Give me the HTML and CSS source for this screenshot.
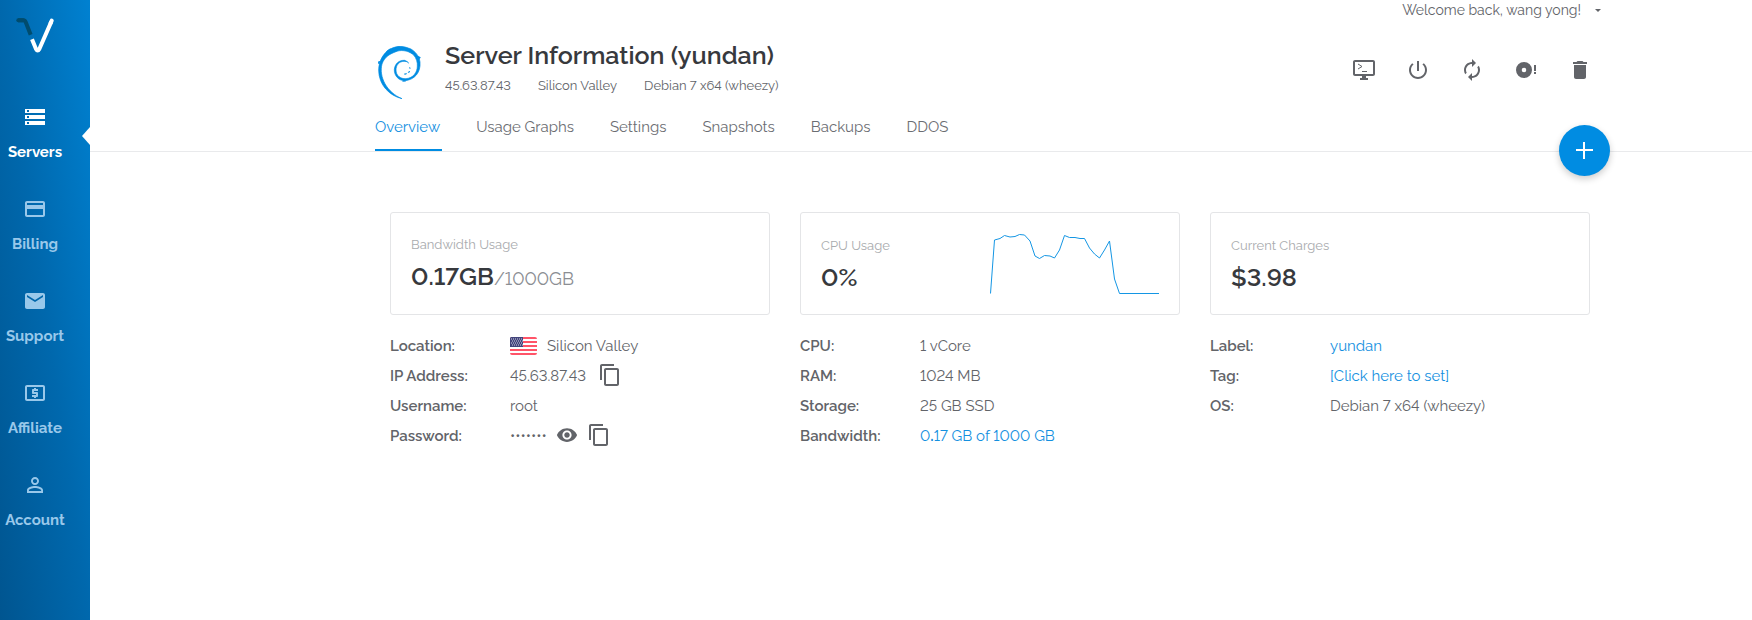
FILE: index.html
```html
<!DOCTYPE html>
<html lang="en">
<head>
<meta charset="utf-8">
<title>Server Information</title>
<link rel="stylesheet" href="styles.css">
</head>
<body>
<div class="app">
  <aside class="sidebar">
    <a class="brand" href="#" aria-label="Home">
      <svg width="38" height="36" viewBox="0 0 114 108" fill="none" stroke-linecap="round" stroke-linejoin="round">
        <path d="M6 10h16q5 0 7 5l15 38" stroke="#004c6d" stroke-width="12" stroke-linecap="butt"/>
        <path d="M7 10h14" stroke="#004c6d" stroke-width="12"/>
        <path d="M48 67l12 29q5 9 10 0L106 14" stroke="#fff" stroke-width="12" stroke-linecap="butt"/>
        <path d="M104 18l3-7" stroke="#fff" stroke-width="12"/>
      </svg>
    </a>
    <nav class="menu">
      <a class="menu-item active" href="#">
        <svg width="24" height="24" viewBox="0 0 24 24"><path d="M2 20h20v-4H2v4zm2-3h2v2H4v-2zM2 4v4h20V4H2zm4 3H4V5h2v2zm-4 7h20v-4H2v4zm2-3h2v2H4v-2z"/></svg>
        <span>Servers</span>
      </a>
      <a class="menu-item" href="#">
        <svg width="24" height="24" viewBox="0 0 24 24"><path d="M20 4H4c-1.11 0-1.99.89-1.99 2L2 18c0 1.11.89 2 2 2h16c1.11 0 2-.89 2-2V6c0-1.11-.89-2-2-2zm0 14H4v-6h16v6zm0-10H4V6h16v2z"/></svg>
        <span>Billing</span>
      </a>
      <a class="menu-item" href="#">
        <svg width="24" height="24" viewBox="0 0 24 24"><path d="M20 4H4c-1.1 0-1.99.9-1.99 2L2 18c0 1.1.9 2 2 2h16c1.1 0 2-.9 2-2V6c0-1.1-.9-2-2-2zm0 4l-8 5-8-5V6l8 5 8-5v2z"/></svg>
        <span>Support</span>
      </a>
      <a class="menu-item" href="#">
        <svg width="24" height="24" viewBox="0 0 24 24"><path d="M11 17h2v-1h1c.55 0 1-.45 1-1v-3c0-.55-.45-1-1-1h-3v-1h4V8h-2V7h-2v1h-1c-.55 0-1 .45-1 1v3c0 .55.45 1 1 1h3v1H9v2h2v1zm9-13H4c-1.11 0-1.99.89-1.99 2L2 18c0 1.11.89 2 2 2h16c1.11 0 2-.89 2-2V6c0-1.11-.89-2-2-2zm0 14H4V6h16v12z"/></svg>
        <span>Affiliate</span>
      </a>
      <a class="menu-item" href="#">
        <svg width="24" height="24" viewBox="0 0 24 24"><path d="M12 5.9c1.16 0 2.1.94 2.1 2.1s-.94 2.1-2.1 2.1S9.900 9.160 9.900 8s.94-2.100 2.100-2.100m0 9c2.970 0 6.100 1.460 6.100 2.100v1.100H5.900V17c0-.64 3.130-2.100 6.100-2.100M12 4C9.790 4 8 5.790 8 8s1.790 4 4 4 4-1.790 4-4-1.790-4-4-4zm0 9c-2.670 0-8 1.340-8 4v3h16v-3c0-2.660-5.330-4-8-4z"/></svg>
        <span>Account</span>
      </a>
    </nav>
  </aside>

  <main class="main">
    <header class="header">
      <div class="topbar">
        <button class="user" type="button">Welcome back, wang yong!
          <svg width="6" height="3" viewBox="0 0 6 3"><path d="M0 0h6L3 3z"/></svg>
        </button>
      </div>
      <div class="server">
        <svg class="os-logo" width="43" height="53" viewBox="0 0 129 159">
          <path d="M72 158C36 150 2 118 2 72C3 30 32 1 68 1C82 2 89 6 97 8C111 16 123 28 126 48C129 80 109 101 82 104C62 105 48 89 49 70C51 53 63 42 80 43L88 47L78 46C63 46 54 58 54 72C54 89 67 99 84 98C106 96 118 79 118 60C119 50 115 36 107 27L103 24C88 13 67 11 54 17C38 23 20 31 12 54C2 92 26 139 72 158Z"/>
          <path d="M0 48l6-2-3 8zM26 16l11-8-7 14zM75 104l8 1-9 1zM79 84l7-1-5 2zM91 79l4-4-2 5zM95 64l1 4zM88 48l4 3zM112 28l15 6-6 10z"/>
        </svg>
        <div class="server-text">
          <h1>Server Information (yundan)</h1>
          <div class="facts"><span>45.63.87.43</span><span>Silicon Valley</span><span>Debian 7 x64 (wheezy)</span></div>
        </div>
        <div class="actions">
          <button type="button" aria-label="View console">
            <svg width="24" height="24" viewBox="0 0 24 24"><path d="M21 2H3c-1.100 0-2 .9-2 2v12c0 1.100.9 2 2 2h7v2H8v2h8v-2h-2v-2h7c1.100 0 2-.9 2-2V4c0-1.100-.9-2-2-2zm0 14H3V4h18v12z"/><path d="M6 6l4 2.500L6 11M10 13.500h5" fill="none" stroke="currentColor"/></svg>
          </button>
          <button type="button" aria-label="Stop server">
            <svg width="24" height="24" viewBox="0 0 24 24"><path d="M13 3h-2v10h2V3zm4.830 2.170l-1.420 1.420C17.990 7.860 19 9.810 19 12c0 3.870-3.130 7-7 7s-7-3.130-7-7c0-2.190 1.010-4.140 2.580-5.420L6.170 5.170C4.230 6.820 3 9.260 3 12c0 4.970 4.030 9 9 9s9-4.030 9-9c0-2.740-1.230-5.180-3.170-6.830z"/></svg>
          </button>
          <button type="button" aria-label="Restart server">
            <svg width="24" height="24" viewBox="0 0 24 24"><path d="M12 6v3l4-4-4-4v3c-4.420 0-8 3.580-8 8 0 1.570.46 3.030 1.240 4.260L6.700 14.800c-.45-.83-.7-1.790-.7-2.800 0-3.310 2.690-6 6-6zm6.760 1.740L17.300 9.200c.44.84.7 1.790.7 2.800 0 3.310-2.690 6-6 6v-3l-4 4 4 4v-3c4.420 0 8-3.580 8-8 0-1.570-.46-3.030-1.240-4.260z"/></svg>
          </button>
          <button type="button" aria-label="Reinstall server">
            <svg width="24" height="24" viewBox="0 0 24 24"><path fill-rule="evenodd" d="M10 4a8 8 0 1 0 0 16a8 8 0 0 0 0-16zm0 5.700a2.300 2.300 0 1 1 0 4.600a2.300 2.300 0 0 1 0-4.600zM20 7h2v6h-2zM20 14h2v2h-2z"/></svg>
          </button>
          <button type="button" aria-label="Destroy server">
            <svg width="24" height="24" viewBox="0 0 24 24"><path d="M6 19c0 1.100.9 2 2 2h8c1.100 0 2-.9 2-2V7H6v12zM19 4h-3.500l-1-1h-5l-1 1H5v2h14V4z"/></svg>
          </button>
        </div>
      </div>
      <nav class="tabs">
        <a class="tab active" href="#">Overview</a>
        <a class="tab" href="#">Usage Graphs</a>
        <a class="tab" href="#">Settings</a>
        <a class="tab" href="#">Snapshots</a>
        <a class="tab" href="#">Backups</a>
        <a class="tab" href="#">DDOS</a>
      </nav>
      <button class="add" type="button" aria-label="Deploy new server">
        <svg width="17" height="17" viewBox="0 0 17 17"><path d="M7 0h2v7h8v2H9v8H7V9H0V7h7z"/></svg>
      </button>
    </header>

    <div class="columns">
      <section>
        <div class="card">
          <div>
            <div class="card-label">Bandwidth Usage</div>
            <div class="card-value">0.17GB<span class="limit">/1000GB</span></div>
          </div>
        </div>
        <dl class="details">
          <dt>Location:</dt>
          <dd>
            <svg class="flag" width="27" height="18" viewBox="0 0 27 18">
              <rect width="27" height="18" rx="2" fill="#fff"/>
              <path d="M2 0h23q2 0 2 2H0Q0 0 2 0zM0 4h27v2H0zM0 8h27v2H0zM0 12h27v2H0zM0 16h27q0 2-2 2H2q-2 0-2-2z" fill="#ff5468"/>
              <path d="M1 0h12v10H0V1z" fill="#43457c"/>
              <path d="M1 2h12M2 4h11M1 6h12M2 8h11" stroke="#d5d6e6" stroke-dasharray="1 1"/>
            </svg>
            <span>Silicon Valley</span>
          </dd>
          <dt>IP Address:</dt>
          <dd class="copyable"><span>45.63.87.43</span>
            <button type="button" aria-label="Copy IP address"><svg width="24" height="24" viewBox="0 0 24 24"><path d="M16 1H4c-1.100 0-2 .9-2 2v14h2V3h12V1zm3 4H8c-1.100 0-2 .9-2 2v14c0 1.100.9 2 2 2h11c1.100 0 2-.9 2-2V7c0-1.100-.9-2-2-2zm0 16H8V7h11v14z"/></svg></button>
          </dd>
          <dt>Username:</dt>
          <dd>root</dd>
          <dt>Password:</dt>
          <dd><span>•••••••</span>
            <button type="button" aria-label="Show password"><svg width="22" height="22" viewBox="0 0 24 24"><path d="M12 4.500C7 4.500 2.730 7.610 1 12c1.730 4.390 6 7.500 11 7.500s9.270-3.110 11-7.500c-1.730-4.390-6-7.500-11-7.500zM12 17c-2.760 0-5-2.240-5-5s2.240-5 5-5 5 2.240 5 5-2.240 5-5 5zm0-8c-1.660 0-3 1.340-3 3s1.340 3 3 3 3-1.340 3-3-1.340-3-3-3z"/></svg></button>
            <button type="button" aria-label="Copy password"><svg width="24" height="24" viewBox="0 0 24 24"><path d="M16 1H4c-1.100 0-2 .9-2 2v14h2V3h12V1zm3 4H8c-1.100 0-2 .9-2 2v14c0 1.100.9 2 2 2h11c1.100 0 2-.9 2-2V7c0-1.100-.9-2-2-2zm0 16H8V7h11v14z"/></svg></button>
          </dd>
        </dl>
      </section>

      <section>
        <div class="card">
          <div>
            <div class="card-label">CPU Usage</div>
            <div class="card-value">0%</div>
          </div>
          <svg class="chart" width="169" height="62" viewBox="0 0 169 62">
            <polyline points="0.5,60.5 4.5,7 10,5.500 14.500,2.500 20,4 25,3.500 29.500,1.500 34.500,2 40,8 45,23 49.500,25.500 54.500,22.500 60,23 64.500,25 69.500,17 74.500,2.500 79.500,4.500 85,4.500 90,5.500 94.500,5.500 99.500,15 104.500,21 109.500,25 114.500,17 119.500,8 124.500,46 129.500,60.500 169,60.500"/>
          </svg>
        </div>
        <dl class="details">
          <dt>CPU:</dt><dd>1 vCore</dd>
          <dt>RAM:</dt><dd>1024 MB</dd>
          <dt>Storage:</dt><dd>25 GB SSD</dd>
          <dt>Bandwidth:</dt><dd><a href="#">0<b>.</b>17 GB of 1000 GB</a></dd>
        </dl>
      </section>

      <section>
        <div class="card">
          <div>
            <div class="card-label">Current Charges</div>
            <div class="card-value">$3.98</div>
          </div>
        </div>
        <dl class="details">
          <dt>Label:</dt><dd><a href="#">yundan</a></dd>
          <dt>Tag:</dt><dd><a href="#">[Click here to set]</a></dd>
          <dt>OS:</dt><dd>Debian 7 x64 (wheezy)</dd>
        </dl>
      </section>
    </div>
  </main>
</div>
</body>
</html>
```
FILE: styles.css
```css
* { box-sizing: border-box; }
body {
  margin: 0;
  background: #fff;
  color: #626469;
  font: 15px/20px Raleway, Lato, "Open Sans", sans-serif;
  font-variant-numeric: lining-nums;
}
a { color: #1490df; text-decoration: none; }
button {
  display: flex;
  align-items: center;
  margin: 0;
  padding: 0;
  border: 0;
  background: none;
  color: inherit;
  font: inherit;
  cursor: pointer;
}
svg { display: block; flex: none; fill: currentColor; }

.app { display: flex; min-height: 100vh; }

.sidebar {
  flex: none;
  width: 90px;
  padding: 17px 20px 0 0;
  background: linear-gradient(to bottom left, #0081d1, #0068ad 50%, #005590);
}
.brand { display: flex; justify-content: center; }
.brand svg { fill: none; }
.menu { display: flex; flex-direction: column; gap: 35px; margin-top: 52px; }
.menu-item {
  position: relative;
  display: flex;
  flex-direction: column;
  align-items: center;
  gap: 13px;
  color: #99c8ea;
  font-weight: 700;
}
.menu-item.active { color: #fff; }
.menu-item.active::after {
  content: "";
  position: absolute;
  top: 22px;
  right: -20px;
  border: solid transparent;
  border-width: 9px 8px 9px 0;
  border-right-color: #fff;
}

.main { flex: 1; min-width: 0; }
.header {
  position: relative;
  padding: 0 160px 0 285px;
  border-bottom: 1px solid #e9eaec;
}
.topbar { display: flex; justify-content: flex-end; height: 20px; }
.user { gap: 14px; margin-right: -9px; font-size: 14px; }
.server { display: flex; padding: 26px 0 0 3px; }
.os-logo { fill: #008ce2; stroke: #008ce2; stroke-width: 2; }
.server-text { margin-left: 24px; }
h1 {
  margin: -5px 0 0;
  color: #37393d;
  font-size: 25px;
  font-weight: 600;
  line-height: 28px;
}
.facts { display: flex; gap: 27px; margin-top: 7px; font-size: 13px; }
.actions { display: flex; align-items: flex-start; gap: 30px; margin: 12px 0 0 auto; }
.tabs { display: flex; gap: 34px; }
.tab { padding: 18px 2px 12px 0; border-bottom: 2px solid transparent; color: #6b6d72; }
.tab.active { border-color: #008ce2; color: #1490df; }
.add {
  position: absolute;
  right: 142px;
  bottom: -25px;
  justify-content: center;
  width: 51px;
  height: 51px;
  border-radius: 50%;
  background: #008ce2;
  box-shadow: 0 3px 7px #0003;
  color: #fff;
}

.columns {
  display: grid;
  grid-template-columns: repeat(3, 1fr);
  gap: 30px;
  padding: 60px 162px 40px 300px;
}
.card {
  display: flex;
  align-items: center;
  justify-content: space-between;
  height: 103px;
  padding: 0 20px;
  border: 1px solid #e4e5e7;
  border-radius: 3px;
}
.card-label { color: #a9abae; font-size: 13px; }
.card-value { margin-top: 7px; color: #37393d; font-size: 25px; font-weight: 600; line-height: 28px; }
.limit { color: #8b8e93; font-size: 18px; font-weight: 400; }
.chart { fill: none; stroke: #1496e4; }

.details {
  display: grid;
  grid-template-columns: 120px 1fr;
  grid-auto-rows: 30px;
  align-items: center;
  margin: 16px 0 0;
}
.details dt { font-weight: 600; }
.details dd { display: flex; align-items: center; gap: 9px; margin: 0; }
.details button { padding-bottom: 2px; }
.details .copyable { gap: 12px; }
.flag { margin-right: 1px; }

@media (max-width: 1400px) {
  .header { padding: 0 40px 0 25px; }
  .add { right: 22px; }
  .columns { padding-right: 40px; padding-left: 40px; }
}
```
